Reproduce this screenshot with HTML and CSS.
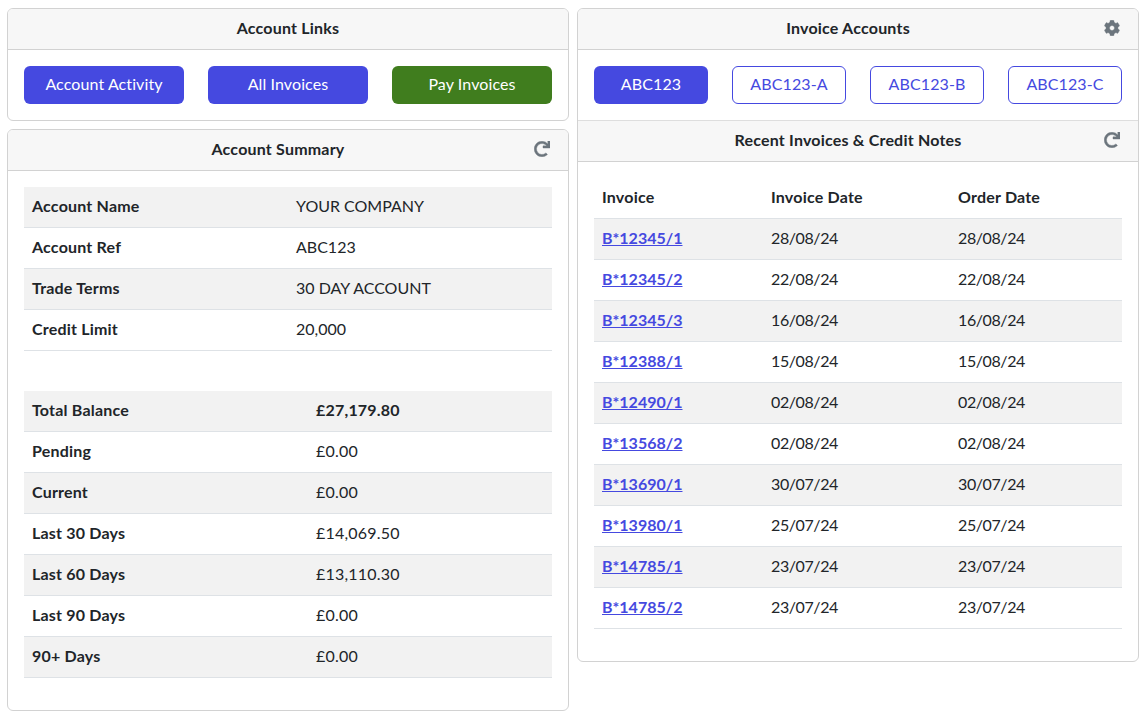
FILE: index.html
```html
<!DOCTYPE html>
<html lang="en">
<head>
  <meta charset="UTF-8" />
  <title>Account Overview</title>
  <meta name="viewport" content="width=device-width, initial-scale=1.0" />
  <link rel="stylesheet" href="styles.css">
</head>
<body>
  <svg class="icon-defs" aria-hidden="true">
    <symbol id="icon-redo" viewBox="0 0 512 512">
      <path d="M500.33 0h-47.41a12 12 0 0 0-12 12.57l4 82.76A247.42 247.42 0 0 0 256 8C119.34 8 7.9 119.53 8 256.19 8.1 393.07 119.1 504 256 504a247.1 247.1 0 0 0 166.18-63.91 12 12 0 0 0 .48-17.43l-34-34a12 12 0 0 0-16.38-.55A176 176 0 1 1 402.1 157.8l-101.53-4.87a12 12 0 0 0-12.57 12v47.41a12 12 0 0 0 12 12h200.33a12 12 0 0 0 12-12V12a12 12 0 0 0-12-12z"/>
    </symbol>
    <symbol id="icon-cog" viewBox="0 0 512 512">
      <path d="M487.4 315.7l-42.6-24.6c4.3-23.2 4.3-47 0-70.2l42.6-24.6c4.9-2.8 7.1-8.6 5.5-14-11.1-35.6-30-67.8-54.7-94.6-3.8-4.1-10-5.1-14.8-2.3L380.8 110c-17.9-15.4-38.5-27.3-60.8-35.1V25.8c0-5.6-3.9-10.5-9.4-11.7-36.7-8.2-74.3-7.8-109.2 0-5.5 1.2-9.4 6.1-9.4 11.7V75c-22.2 7.9-42.8 19.8-60.8 35.1L88.7 85.5c-4.9-2.8-11-1.9-14.8 2.3-24.7 26.7-43.6 58.9-54.7 94.6-1.7 5.4.6 11.2 5.5 14L67.3 221c-4.3 23.2-4.3 47 0 70.2l-42.6 24.6c-4.9 2.8-7.1 8.6-5.5 14 11.1 35.6 30 67.8 54.7 94.6 3.8 4.1 10 5.1 14.8 2.3l42.6-24.6c17.9 15.4 38.5 27.3 60.8 35.1v49.2c0 5.6 3.9 10.5 9.4 11.7 36.7 8.2 74.3 7.8 109.2 0 5.5-1.2 9.4-6.1 9.4-11.7v-49.2c22.2-7.9 42.8-19.8 60.8-35.1l42.6 24.6c4.9 2.8 11 1.9 14.8-2.3 24.7-26.7 43.6-58.9 54.7-94.6 1.5-5.5-.7-11.3-5.6-14.1zM256 336c-44.1 0-80-35.9-80-80s35.9-80 80-80 80 35.9 80 80-35.9 80-80 80z"/>
    </symbol>
  </svg>

  <div class="page">
    <div class="column">
      <section class="card">
        <div class="card-header"><h2>Account Links</h2></div>
        <div class="card-body link-row">
          <a class="btn btn-primary" href="#">Account Activity</a>
          <a class="btn btn-primary" href="#">All Invoices</a>
          <a class="btn btn-green" href="#">Pay Invoices</a>
        </div>
      </section>

      <section class="card">
        <div class="card-header">
          <h2>Account Summary</h2>
          <button class="icon-btn"><svg><use href="#icon-redo"></use></svg></button>
        </div>
        <div class="card-body">
          <table class="table details-table">
            <tr><th>Account Name</th><td>YOUR COMPANY</td></tr>
            <tr><th>Account Ref</th><td>ABC123</td></tr>
            <tr><th>Trade Terms</th><td>30 DAY ACCOUNT</td></tr>
            <tr><th>Credit Limit</th><td>20,000</td></tr>
          </table>
          <table class="table balance-table">
            <tr><th>Total Balance</th><td><strong>£27,179.80</strong></td></tr>
            <tr><th>Pending</th><td>£0.00</td></tr>
            <tr><th>Current</th><td>£0.00</td></tr>
            <tr><th>Last 30 Days</th><td>£14,069.50</td></tr>
            <tr><th>Last 60 Days</th><td>£13,110.30</td></tr>
            <tr><th>Last 90 Days</th><td>£0.00</td></tr>
            <tr><th>90+ Days</th><td>£0.00</td></tr>
          </table>
        </div>
      </section>
    </div>

    <div class="column">
      <section class="card">
        <div class="card-header">
          <h2>Invoice Accounts</h2>
          <button class="icon-btn"><svg><use href="#icon-cog"></use></svg></button>
        </div>
        <div class="card-body tab-row">
          <a class="btn btn-primary" href="#">ABC123</a>
          <a class="btn btn-outline" href="#">ABC123-A</a>
          <a class="btn btn-outline" href="#">ABC123-B</a>
          <a class="btn btn-outline" href="#">ABC123-C</a>
        </div>
        <div class="card-header card-header-mid">
          <h2>Recent Invoices &amp; Credit Notes</h2>
          <button class="icon-btn"><svg><use href="#icon-redo"></use></svg></button>
        </div>
        <div class="card-body">
          <table class="table invoice-table">
            <thead>
              <tr><th>Invoice</th><th>Invoice Date</th><th>Order Date</th></tr>
            </thead>
            <tbody>
              <tr><td><a href="#">B*12345/1</a></td><td>28/08/24</td><td>28/08/24</td></tr>
              <tr><td><a href="#">B*12345/2</a></td><td>22/08/24</td><td>22/08/24</td></tr>
              <tr><td><a href="#">B*12345/3</a></td><td>16/08/24</td><td>16/08/24</td></tr>
              <tr><td><a href="#">B*12388/1</a></td><td>15/08/24</td><td>15/08/24</td></tr>
              <tr><td><a href="#">B*12490/1</a></td><td>02/08/24</td><td>02/08/24</td></tr>
              <tr><td><a href="#">B*13568/2</a></td><td>02/08/24</td><td>02/08/24</td></tr>
              <tr><td><a href="#">B*13690/1</a></td><td>30/07/24</td><td>30/07/24</td></tr>
              <tr><td><a href="#">B*13980/1</a></td><td>25/07/24</td><td>25/07/24</td></tr>
              <tr><td><a href="#">B*14785/1</a></td><td>23/07/24</td><td>23/07/24</td></tr>
              <tr><td><a href="#">B*14785/2</a></td><td>23/07/24</td><td>23/07/24</td></tr>
            </tbody>
          </table>
        </div>
      </section>
    </div>
  </div>
</body>
</html>
```

FILE: styles.css
```css
* {
  box-sizing: border-box;
}

body {
  margin: 0;
  font-family: 'Lato', 'Noto Sans', sans-serif;
  font-size: 16px;
  line-height: 24px;
  letter-spacing: 0.2px;
  color: #212529;
  background: #fff;
}

.icon-defs {
  display: none;
}

.page {
  display: grid;
  grid-template-columns: 562px 562px;
  column-gap: 8px;
  align-items: start;
  padding: 8px 8px 0 7px;
}

.column {
  display: flex;
  flex-direction: column;
  gap: 8px;
}

.card {
  background: #fff;
  border: 1px solid #d2d2d2;
  border-radius: 6px;
  overflow: hidden;
}

.card-header {
  display: flex;
  align-items: center;
  height: 41px;
  padding: 0 16px 3px;
  background: #f7f7f7;
  border-bottom: 1px solid #d2d2d2;
}

.card-header-mid {
  height: 42px;
  border-top: 1px solid #dedede;
}

.card-header h2 {
  flex: 1;
  margin: 0;
  font-size: 16px;
  font-weight: 700;
  text-align: center;
}

.icon-btn {
  width: 20px;
  height: 24px;
  padding: 0;
  border: none;
  background: none;
  cursor: pointer;
  display: flex;
  align-items: center;
  justify-content: center;
}

.icon-btn svg {
  width: 16px;
  height: 16px;
  fill: #6c757d;
  stroke: #6c757d;
  stroke-width: 14px;
}

.card-body {
  padding: 16px;
}

.link-row {
  display: flex;
  gap: 24px;
}

.tab-row {
  display: flex;
  gap: 24px;
}

.btn {
  flex: 1;
  height: 38px;
  line-height: 34px;
  letter-spacing: 0.1px;
  text-align: center;
  text-decoration: none;
  border: 1px solid transparent;
  border-radius: 6px;
}

.btn-primary {
  background: #4549e0;
  color: #fff;
}

.btn-green {
  background: #407d1e;
  color: #fff;
}

.btn-outline {
  color: #4549e0;
  border-color: #4549e0;
}

.table {
  width: 100%;
  border-collapse: separate;
  border-spacing: 0;
  table-layout: fixed;
}

.table th,
.table td {
  height: 41px;
  padding: 0 8px 3px;
  text-align: left;
  border-bottom: 1px solid #dee2e6;
}

.table th {
  font-weight: 700;
}

.details-table td {
  letter-spacing: 0;
}

.details-table tr:nth-child(odd),
.balance-table tr:nth-child(odd),
.invoice-table tbody tr:nth-child(odd) {
  background: #f2f2f2;
}

.details-table {
  margin-bottom: 40px;
}

.details-table th {
  width: 264px;
}

.balance-table th {
  width: 284px;
}

.balance-table {
  margin-bottom: 16px;
}

.invoice-table {
  margin-bottom: 16px;
}

.invoice-table th:nth-child(1) {
  width: 169px;
}

.invoice-table th:nth-child(2) {
  width: 187px;
}

.invoice-table td {
  letter-spacing: -0.4px;
}

.invoice-table a {
  color: #4549e0;
  font-weight: 700;
  letter-spacing: 0;
}
```
